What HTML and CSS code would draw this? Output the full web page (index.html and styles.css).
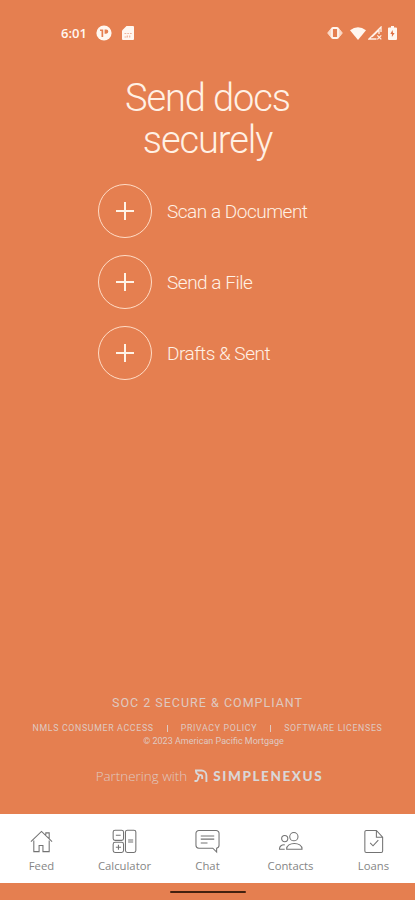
FILE: index.html
```html
<!DOCTYPE html>
<html lang="en">
<head>
<meta charset="utf-8">
<title>Send docs securely</title>
<link rel="stylesheet" href="styles.css">
</head>
<body>
<div class="screen">
  <header class="status">
    <span class="time">6:01</span>
    <svg class="app-icon" width="16" height="16" viewBox="0 0 16 16"><circle cx="8" cy="8" r="7.6" fill="#fff7f0"/><path d="M4 4.5h3.200V12H5.500V6H4zM8.600 4.500h1.600a2.100 2.100 0 0 1 0 4.200H8.600z" fill="#e57f50"/></svg>
    <svg class="sim" width="12" height="14" viewBox="0 0 12 14"><path d="M4.500 0H11a1 1 0 0 1 1 1v12a1 1 0 0 1-1 1H1a1 1 0 0 1-1-1V4.500z" fill="#fff7f0"/><path d="M2.500 7.500h1.800m1 0h1.600m1 0h1.800M2.500 11h1.800m1-1.400v2m2.400-2v2" stroke="#efb298" stroke-width="1.200"/></svg>
    <div class="status-right">
      <svg class="vibrate" width="16" height="12" viewBox="0 0 16 12"><path d="M4.500 1.200.7 6l3.800 4.800M11.500 1.200 15.300 6l-3.800 4.800" fill="#fbd9c7" stroke="#fbd9c7"/><rect x="5" y="1" width="6" height="10" rx="1" fill="#e57f50" stroke="#fff7f0" stroke-width="1.800"/></svg>
      <svg class="wifi" width="16" height="13" viewBox="0 0 16 13"><path d="M0 3.200Q8-2.800 16 3.200L8 13z" fill="#fff7f0"/></svg>
      <svg class="signal" width="14" height="14" viewBox="0 0 14 14"><path d="M13 6V1L1 13h7.500M4 10.800 11 4v4" fill="none" stroke="#fff1e8" stroke-width="1.300"/><path d="m9.300 9.300 4 4m0-4-4 4" stroke="#fff1e8" stroke-width="1.200"/></svg>
      <svg class="battery" width="9" height="14" viewBox="0 0 9 14"><path d="M3 0h3v1.400h2a1 1 0 0 1 1 1V13a1 1 0 0 1-1 1H1a1 1 0 0 1-1-1V2.400a1 1 0 0 1 1-1h2z" fill="#fff7f0"/><path d="M4.500 4 2.400 8h1.500v3l2.700-4H5z" fill="#df6f42"/></svg>
    </div>
  </header>

  <h1>Send docs<br>securely</h1>

  <ul class="actions">
    <li><span class="ring"><svg width="18" height="18" viewBox="0 0 18 18"><path d="M9 0v18M0 9h18"/></svg></span><span class="label">Scan a Document</span></li>
    <li><span class="ring"><svg width="18" height="18" viewBox="0 0 18 18"><path d="M9 0v18M0 9h18"/></svg></span><span class="label">Send a File</span></li>
    <li><span class="ring"><svg width="18" height="18" viewBox="0 0 18 18"><path d="M9 0v18M0 9h18"/></svg></span><span class="label">Drafts &amp; Sent</span></li>
  </ul>

  <footer>
    <p class="soc">SOC 2 SECURE &amp; COMPLIANT</p>
    <p class="links"><span>NMLS CONSUMER ACCESS</span><i></i><span>PRIVACY POLICY</span><i></i><span>SOFTWARE LICENSES</span></p>
    <p class="copy">© 2023 American Pacific Mortgage</p>
    <div class="partner">
      <span class="with">Partnering with</span>
      <svg width="14" height="14" viewBox="0 0 14 14"><path d="M1 1.500h6.500a4.900 4.900 0 0 1 4.900 4.900V13M2 1.500c0 2.400.8 3.900 3 4.100M.5 12h1.800c2.600 0 1.200-6 4-6 1.300 0 1.900.8 1.900 2v2" fill="none" stroke="#d9d7d8" stroke-width="1.900"/></svg>
      <span class="brand">SIMPLENEXUS</span>
    </div>
  </footer>

  <nav>
    <a><svg viewBox="0 0 26 26"><path d="m2 13.200 11-10.700 11 10.700M5 12v11.500h5.500v-6.300h4v6.300H21V12M17.500 6V4H21v6"/></svg><span>Feed</span></a>
    <a><svg viewBox="0 0 26 26"><rect x="1.200" y="1.200" width="10.800" height="10.600" rx="2"/><rect x="1.200" y="13.800" width="10.800" height="10.600" rx="2"/><rect x="14" y="1.200" width="10.800" height="23.200" rx="2"/><path d="M4 6.500h5M4 19h5.400M6.700 16.300v5.400M16.800 11.500h5.200M16.800 13.600h5.200"/></svg><span>Calculator</span></a>
    <a><svg viewBox="0 0 26 26"><path d="M4 1.500h18a3 3 0 0 1 3 3V17a3 3 0 0 1-2.500 3v4L18.500 20H4a3 3 0 0 1-3-3V4.500a3 3 0 0 1 3-3zM6 7.200h14M6 10.500h14M6 14.500h7"/></svg><span>Chat</span></a>
    <a><svg viewBox="0 0 26 26"><circle cx="16.500" cy="8" r="4.300"/><circle cx="7" cy="10" r="3.200"/><path d="M9 21c-.5-8 16.500-8 16 0zM7 21H1.500c0-3.400 2.500-4.700 5.500-4.500"/></svg><span>Contacts</span></a>
    <a><svg viewBox="0 0 26 26"><path d="M5.500 1.500H16l6.500 7V23a1.500 1.500 0 0 1-1.500 1.500H5.500A1.500 1.500 0 0 1 4 23V3a1.500 1.500 0 0 1 1.500-1.500zM16 1.500v7h6.500M9.500 14.500l3 3 5.500-6"/></svg><span>Loans</span></a>
  </nav>
  <div class="gesture"><b></b></div>
</div>
</body>
</html>
```

FILE: styles.css
```css
* { box-sizing: border-box; margin: 0; padding: 0; }
body { background: #e57f50; font-family: Roboto, sans-serif; color: #fff1e5; }
.screen { width: 415px; height: 900px; display: flex; flex-direction: column; overflow: hidden; }
.status { display: flex; align-items: center; height: 66px; padding: 0 18px 0 61px; }
.time { font: 600 13px/16px "Open Sans", sans-serif; width: 35px; white-space: nowrap; color: #fff7f0; }
.sim { margin-left: 10px; }
.status-right { display: flex; align-items: center; margin-left: auto; }
.wifi { margin-left: 7px; }
.signal { margin-left: 2px; }
.battery { margin-left: 6px; }
h1 { margin-top: 11px; font-weight: 300; font-size: 38px; line-height: 42px; letter-spacing: -1.1px; text-align: center; }
.actions { list-style: none; margin: 23px 0 0 98px; display: flex; flex-direction: column; gap: 17px; }
.actions li { display: flex; align-items: center; gap: 15px; height: 54px; }
.ring { width: 54px; height: 54px; border: 1.4px solid #ffdcc6; border-radius: 50%; display: flex; align-items: center; justify-content: center; }
.ring path { stroke: #fff3e6; stroke-width: 2; }
.label { padding-top: 2px; font-weight: 300; font-size: 19px; line-height: 24px; letter-spacing: -.48px; white-space: nowrap; }
footer { margin-top: auto; height: 120px; display: flex; flex-direction: column; align-items: center; color: #dfc9c1; white-space: nowrap; }
.soc { margin-top: 1px; font-size: 12.500px; line-height: 16px; letter-spacing: 1px; }
.links { display: flex; align-items: center; margin-top: 11px; font-size: 8.800px; line-height: 12px; letter-spacing: .66px; }
.links i { width: 1px; height: 7px; background: #dfc9c1; margin: 0 13px; }
.copy { font-size: 9px; line-height: 12px; margin: 1px 0 0 12px; }
.partner { display: flex; align-items: center; margin: 19px 0 0 4px; height: 20px; }
.with { font: 300 13.400px/18px "Open Sans", sans-serif; margin-right: 7px; }
.brand { font: 900 13.500px/16px Lato, sans-serif; letter-spacing: 1.6px; margin-left: 5px; color: #d9d7d8; }
nav { display: grid; grid-template-columns: repeat(5, 1fr); height: 69px; background: #fff; }
nav a { display: flex; flex-direction: column; align-items: center; padding-top: 15px; color: #858585; }
nav svg { width: 25px; height: 25px; fill: none; stroke: #737373; stroke-width: 1.1; }
nav span { font: 400 11.300px/16px "Open Sans", sans-serif; margin-top: 4px; }
.gesture { height: 17px; padding-top: 8px; display: flex; justify-content: center; }
.gesture b { width: 76px; height: 2px; border-radius: 1px; background: #42210f; }
```
